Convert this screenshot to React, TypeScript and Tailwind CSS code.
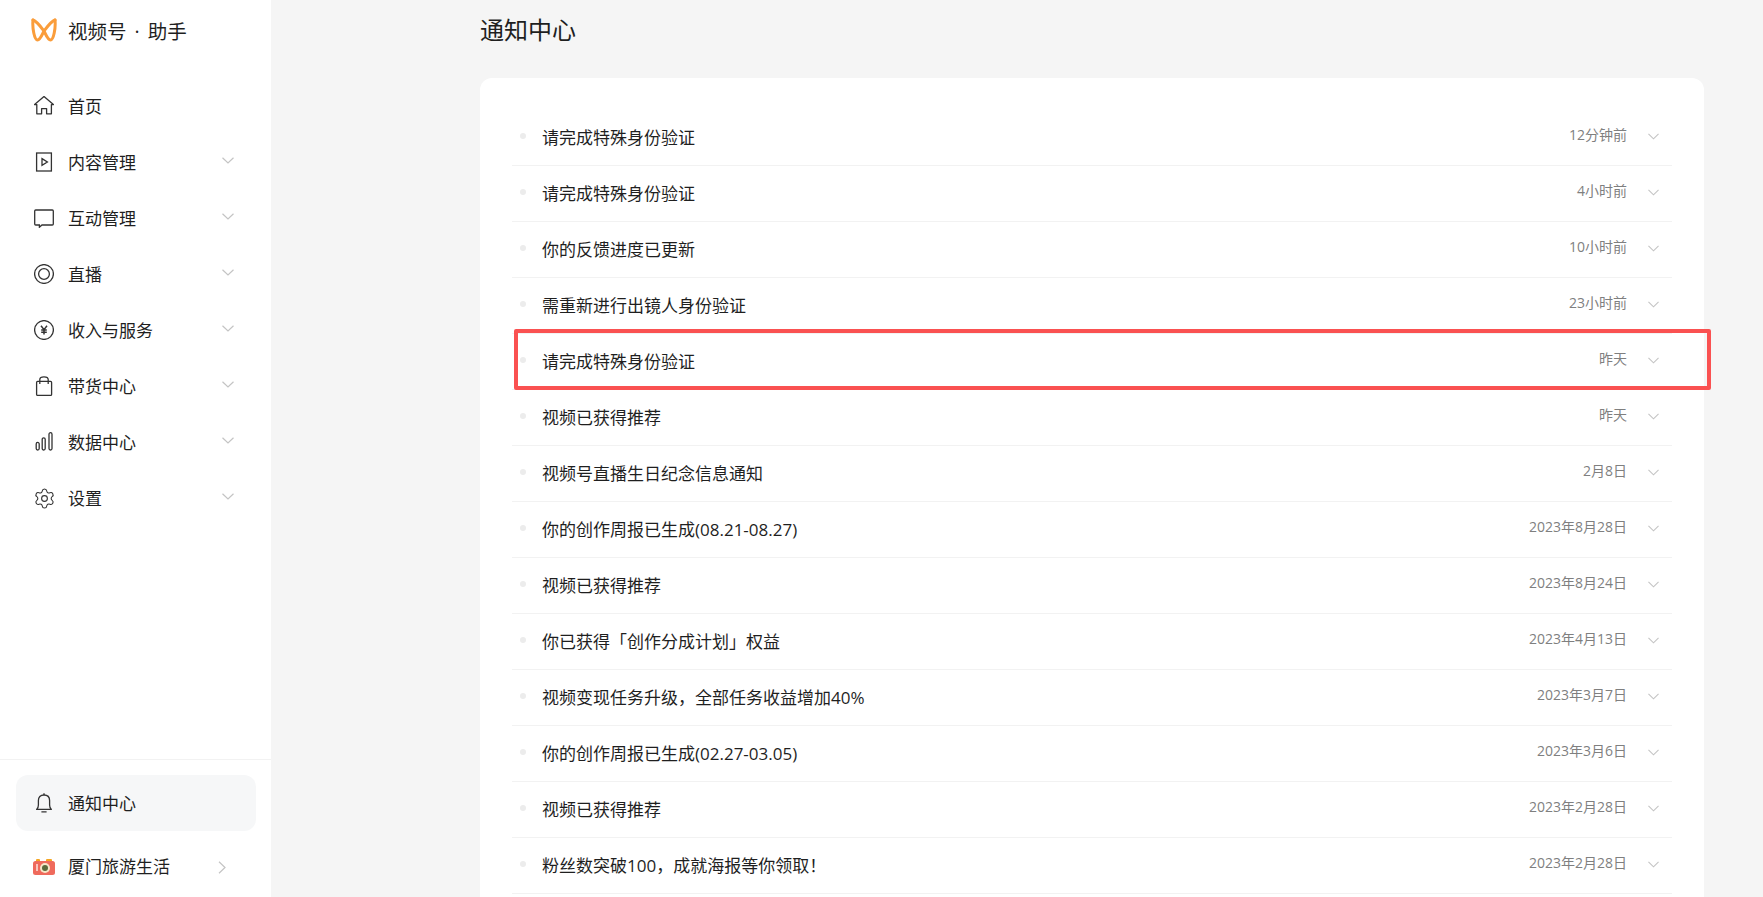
import { ReactNode } from 'react'
import { Settings } from 'lucide-react'

const font = { fontFamily: '"Open Sans", "Noto Sans CJK SC", sans-serif' }

function Chevron({ className }: { className: string }) {
  return (
    <svg viewBox="0 0 12 7" fill="none" stroke="#c4c4c4" strokeWidth="1.2" className={className}>
      <path d="M0.5 0.7 L6 6 L11.5 0.7" />
    </svg>
  )
}

const iconProps = {
  viewBox: '0 0 20 20',
  fill: 'none',
  stroke: '#333333',
  strokeWidth: 1.3,
  className: 'w-5 h-5 shrink-0',
}

const icons: Record<string, ReactNode> = {
  home: (
    <svg {...iconProps}>
      <path d="M0.6 8.6 L10 0.6 L19.4 8.6 H17.4 V17.8 H12.6 V12.6 H7.6 V17.8 H2.8 V8.6 Z" strokeLinejoin="round" />
    </svg>
  ),
  content: (
    <svg {...iconProps}>
      <rect x="2.6" y="1" width="14.8" height="18" />
      <path d="M8 6.6 L13.4 10 L8 13.4 Z" />
    </svg>
  ),
  chat: (
    <svg {...iconProps}>
      <path d="M0.7 3 Q0.7 2 1.7 2 H18.3 Q19.3 2 19.3 3 V16 Q19.3 17 18.3 17 H8 L5.4 19.2 V17 H1.7 Q0.7 17 0.7 16 Z" />
    </svg>
  ),
  live: (
    <svg {...iconProps}>
      <circle cx="10" cy="10" r="9.4" />
      <circle cx="10" cy="10" r="5.4" />
    </svg>
  ),
  money: (
    <svg {...iconProps}>
      <circle cx="10" cy="10" r="9.4" />
      <path d="M7 5.8 L10 9.6 L13 5.8 M10 9.6 V14.6 M7.2 10 H12.8 M7.2 12.2 H12.8" strokeWidth="1.5" />
    </svg>
  ),
  bag: (
    <svg {...iconProps}>
      <rect x="2.6" y="5.4" width="15" height="14" rx="1" />
      <path d="M5.8 8 V3.6 Q5.8 0.8 10 0.8 Q14.2 0.8 14.2 3.6 V8" />
    </svg>
  ),
  data: (
    <svg {...iconProps}>
      <rect x="2.2" y="10.4" width="3" height="7.6" rx="1.5" />
      <rect x="8.2" y="5.8" width="3" height="12.2" rx="1.5" />
      <rect x="15" y="0.7" width="3" height="17.3" rx="1.5" />
    </svg>
  ),
  bell: (
    <svg {...iconProps}>
      <path d="M2.6 16.4 Q4.4 15 4.4 12 V7.6 Q4.4 2 10 2 Q15.6 2 15.6 7.6 V12 Q15.6 15 17.4 16.4 Z" strokeLinejoin="round" />
      <path d="M10 0.2 V2 M7.4 18.8 H12.6" />
    </svg>
  ),
}

const navItems = [
  { label: '首页', icon: 'home' },
  { label: '内容管理', icon: 'content', arrow: true },
  { label: '互动管理', icon: 'chat', arrow: true },
  { label: '直播', icon: 'live', arrow: true },
  { label: '收入与服务', icon: 'money', arrow: true },
  { label: '带货中心', icon: 'bag', arrow: true },
  { label: '数据中心', icon: 'data', arrow: true },
  { label: '设置', icon: 'gear', arrow: true },
]

const notices = [
  { title: '请完成特殊身份验证', time: '12分钟前' },
  { title: '请完成特殊身份验证', time: '4小时前' },
  { title: '你的反馈进度已更新', time: '10小时前' },
  { title: '需重新进行出镜人身份验证', time: '23小时前' },
  { title: '请完成特殊身份验证', time: '昨天' },
  { title: '视频已获得推荐', time: '昨天' },
  { title: '视频号直播生日纪念信息通知', time: '2月8日' },
  { title: '你的创作周报已生成(08.21-08.27)', time: '2023年8月28日' },
  { title: '视频已获得推荐', time: '2023年8月24日' },
  { title: '你已获得「创作分成计划」权益', time: '2023年4月13日' },
  { title: '视频变现任务升级，全部任务收益增加40%', time: '2023年3月7日' },
  { title: '你的创作周报已生成(02.27-03.05)', time: '2023年3月6日' },
  { title: '视频已获得推荐', time: '2023年2月28日' },
  { title: '粉丝数突破100，成就海报等你领取！', time: '2023年2月28日' },
]

function Sidebar() {
  return (
    <aside className="w-[271px] shrink-0 h-full bg-white flex flex-col">
      {/* Logo */}
      <div className="h-[60px] flex items-center pl-[31px]">
        <svg viewBox="0 0 26 24" fill="none" stroke="#fa9d3b" strokeWidth="3" strokeLinecap="round" className="w-[26px] h-[24px] shrink-0">
          <path d="M2 2 C6 3.4 10 9 13 13 C15 17 17 22 19.5 22 C22.6 22 24.8 10 24 2" />
          <path d="M24 2 C20 3.4 16 9 13 13 C11 17 9 22 6.5 22 C3.4 22 1.2 10 2 2" />
        </svg>
        <span className="ml-[11px] pt-[3px] text-[19.5px] text-[#1f1f1f] leading-none">
          视频号<span className="mx-[8px]">·</span>助手
        </span>
      </div>

      {/* Nav */}
      <nav className="mt-[18px] flex flex-col">
        {navItems.map((item) => (
          <div key={item.label} className="h-14 flex items-center pl-[34px] relative">
            {item.icon === 'gear' ? (
              <Settings size={23} strokeWidth={1.15} color="#333333" className="shrink-0 -mx-[1.5px]" />
            ) : (
              icons[item.icon]
            )}
            <span className="ml-[14px] pt-[2px] text-[17px] text-[#1f1f1f]">{item.label}</span>
            {item.arrow && <Chevron className="absolute left-[222px] top-[23px] w-3 h-[7px]" />}
          </div>
        ))}
      </nav>

      {/* Bottom */}
      <div className="mt-auto border-t border-[#f2f2f2] pt-[15px]">
        <div className="ml-4 mr-[15px] h-14 rounded-xl bg-[#f6f7f8] flex items-center pl-[18px]">
          {icons.bell}
          <span className="ml-[14px] pt-[2px] text-[17px] text-[#1f1f1f]">通知中心</span>
        </div>
        <div className="mt-[6px] h-[60px] flex items-center pl-[33px] relative">
          <svg viewBox="0 0 22 16" className="w-[22px] h-4 shrink-0">
            <rect x="3" y="0" width="4" height="3" rx="1" fill="#f5a623" />
            <rect x="13" y="0" width="6" height="3" rx="1" fill="#f5a623" />
            <rect x="0" y="2" width="22" height="14" rx="2.5" fill="#ef6a5c" />
            <circle cx="12" cy="9" r="5" fill="#f6e6c8" />
            <circle cx="12" cy="9" r="3" fill="#5a6b3c" />
            <rect x="3" y="5" width="2" height="7" fill="#f9c5bd" />
          </svg>
          <span className="ml-[13px] text-[17px] text-[#1f1f1f]">厦门旅游生活</span>
          <svg viewBox="0 0 8 13" fill="none" stroke="#c4c4c4" strokeWidth="1.2" className="absolute left-[218px] top-[24px] w-2 h-[13px]">
            <path d="M1 0.8 L7 6.5 L1 12.2" />
          </svg>
        </div>
      </div>
    </aside>
  )
}

export default function App() {
  return (
    <div className="h-screen w-full flex overflow-hidden bg-[#f5f5f5] relative" style={font}>
      <Sidebar />

      <main className="flex-1 h-full flex flex-col pl-[209px] pr-[59px]">
        <h1 className="h-[78px] shrink-0 pb-[19px] flex items-center text-2xl font-normal text-[#1f1f1f]">通知中心</h1>

        <div className="flex-1 min-h-0 overflow-hidden bg-white rounded-t-xl pt-[32px] px-8">
          {notices.map((n, i) => (
            <div key={i} className="h-14 flex items-center border-b border-[#f2f2f2]">
              <span className="w-1.5 h-1.5 rounded-full bg-[#ececec] ml-2 -mt-1" />
              <span className="ml-4 text-[17px] text-[#1f1f1f]">{n.title}</span>
              <span className="ml-auto text-sm text-[#7f7f7f] -mt-1.5">{n.time}</span>
              <Chevron className="ml-[21px] mr-[13px] w-[11px] h-[7px] -mt-0.5" />
            </div>
          ))}
        </div>
      </main>

      {/* Highlight box */}
      <div className="absolute left-[514px] top-[329px] w-[1197px] h-[61px] border-[4px] border-[#fa5151] rounded-[2px]" />
    </div>
  )
}
